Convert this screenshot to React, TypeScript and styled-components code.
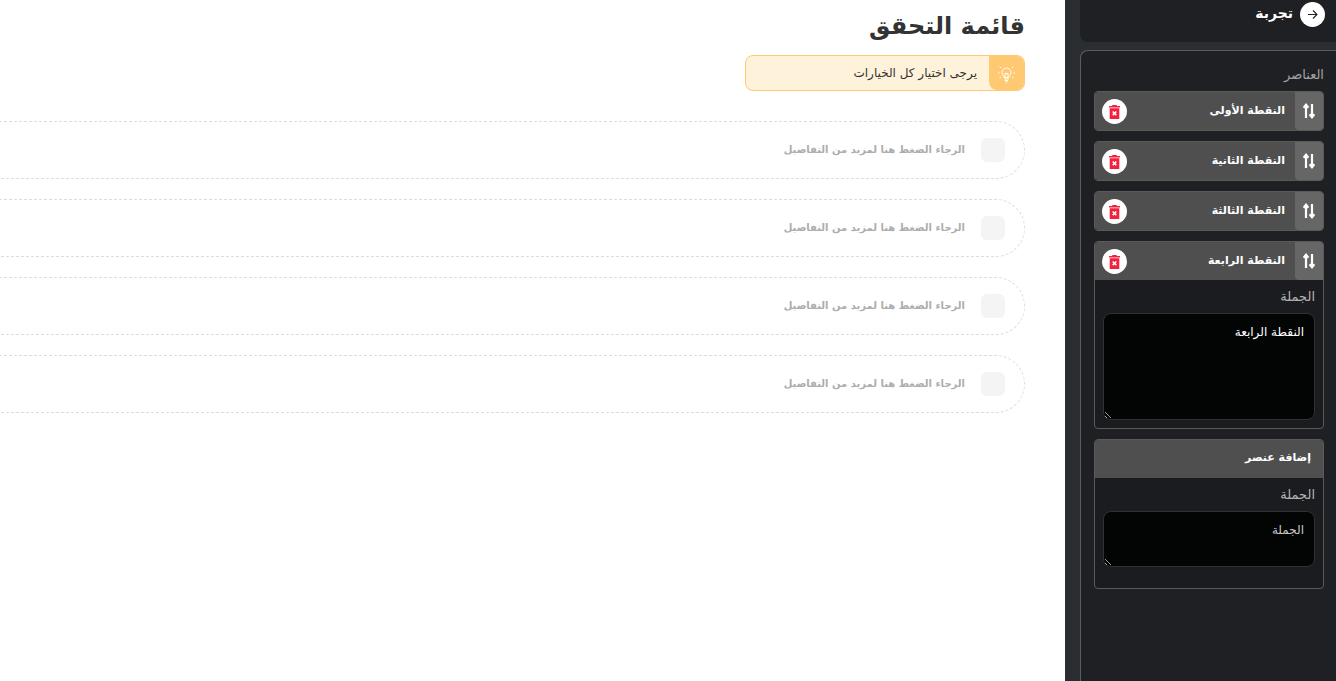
import React from 'react';
import styled, { createGlobalStyle } from 'styled-components';

const Global = createGlobalStyle`
  html, body { margin: 0; padding: 0; height: 100%; background: #fff; }
  #root { height: 100%; }
  * { box-sizing: border-box; }
`;

const Page = styled.div`
  display: flex;
  direction: rtl;
  width: 1336px;
  height: 681px;
  overflow: hidden;
  font-family: "DejaVu Sans", "Noto Sans", sans-serif;
`;

const Sidebar = styled.aside`
  flex: 0 0 271px;
  height: 681px;
  background: #2a2d32;
  display: flex;
  flex-direction: column;
  gap: 8px;
`;

const TopCard = styled.div`
  width: 256px;
  height: 42px;
  background: #1e2024;
  border-bottom-left-radius: 8px;
  display: flex;
  align-items: flex-start;
  gap: 7px;
  padding: 2px 11px 0 0;
`;

const BackButton = styled.span`
  width: 25px;
  height: 25px;
  border-radius: 50%;
  background: #fff;
  color: #222;
  display: flex;
  align-items: center;
  justify-content: center;
`;

const TopTitle = styled.span`
  color: #fff;
  font-size: 14px;
  font-weight: 700;
  line-height: 23px;
`;

const Panel = styled.div`
  width: 256px;
  flex: 1;
  background: #1e2024;
  border: 1px solid #5c5c5c;
  border-right: 0;
  border-bottom: 0;
  border-top-left-radius: 8px;
  padding: 15px 12px 0 12px;
  display: flex;
  flex-direction: column;
  gap: 10px;
`;

const PanelLabel = styled.div`
  color: #a3a3a3;
  font-size: 13px;
  line-height: 18px;
  height: 15px;
`;

const Item = styled.div`
  width: 230px;
  border: 1px solid #5a5a5a;
  border-radius: 4px;
  overflow: hidden;
  background: #1a1c20;
`;

const ItemHeader = styled.div`
  height: 38px;
  display: flex;
  align-items: center;
  background: #4f4f4f;
`;

const Handle = styled.span`
  flex: 0 0 28px;
  height: 38px;
  background: #666;
  border-radius: 0 0 0 4px;
  color: #fff;
  display: flex;
  align-items: center;
  justify-content: center;
`;

const ItemTitle = styled.span`
  flex: 1;
  color: #fff;
  font-size: 11px;
  font-weight: 700;
  padding: 0 10px 2px 0;
`;

const DeleteButton = styled.span`
  width: 25px;
  height: 25px;
  margin-left: 7px;
  margin-top: 1px;
  border-radius: 50%;
  background: #fff;
  display: flex;
  align-items: center;
  justify-content: center;
`;

const ItemBody = styled.div<{ $bottom: number }>`
  padding: 8px 8px ${p => p.$bottom}px 8px;
  display: flex;
  flex-direction: column;
`;

const FieldLabel = styled.label`
  color: #b4b4b4;
  font-size: 13px;
  line-height: 18px;
  height: 25px;
`;

const TextArea = styled.textarea<{ $height: number }>`
  display: block;
  width: 212px;
  height: ${p => p.$height}px;
  background: #030505;
  border: 1px solid #2f3133;
  border-radius: 8px;
  color: #fff;
  font-family: inherit;
  font-size: 12px;
  line-height: 16px;
  padding: 10px 10px;
  direction: rtl;
  outline: none;
  &::placeholder { color: #c8c8c8; opacity: 1; }
`;

const AddHeader = styled.div`
  height: 38px;
  background: #4f4f4f;
  color: #fff;
  font-size: 11px;
  font-weight: 700;
  display: flex;
  align-items: center;
  padding: 0 12px 4px 0;
`;

const Main = styled.main`
  flex: 0 0 1065px;
  height: 681px;
  overflow: hidden;
  background: #fff;
  padding: 8px 40px 0 0;
`;

const Title = styled.h1`
  margin: 0;
  color: #333;
  font-size: 24px;
  font-weight: 700;
  line-height: 36px;
  height: 47px;
`;

const Notice = styled.div`
  width: 280px;
  height: 36px;
  display: flex;
  align-items: stretch;
  background: #fef2da;
  border: 1px solid #ffc971;
  border-radius: 8px;
  overflow: hidden;
  margin-bottom: 30px;
`;

const NoticeIcon = styled.span`
  flex: 0 0 35px;
  background: #ffc971;
  border-radius: 0 0 0 8px;
  display: flex;
  align-items: center;
  justify-content: center;
`;

const NoticeText = styled.span`
  color: #333;
  font-size: 12px;
  line-height: 34px;
  padding-right: 12px;
`;

const Rows = styled.div`
  display: flex;
  flex-direction: column;
  gap: 20px;
  width: 1300px;
`;

const Row = styled.div`
  height: 58px;
  border: 1px dashed #dcdcdc;
  border-radius: 29px;
  display: flex;
  align-items: center;
  gap: 16px;
  padding-right: 19px;
`;

const Check = styled.span`
  width: 24px;
  height: 24px;
  border-radius: 6px;
  background: #f4f4f4;
`;

const RowText = styled.span`
  color: #adadad;
  font-size: 10px;
  font-weight: 700;
  padding-bottom: 2px;
`;

const SortIcon = () => (
  <svg width="12" height="16" viewBox="0 0 12 16" fill="none" stroke="currentColor" strokeWidth="2.2">
    <path d="M3 15V2M.6 4.8L3 1.8l2.4 3" />
    <path d="M9 1v13M6.6 11.2L9 14.2l2.4-3" />
  </svg>
);

const TrashIcon = () => (
  <svg width="11" height="14" viewBox="0 0 11 14">
    <path d="M3.5 0h4l.5 1h3v1.5H0V1h3z" fill="#f5203e" />
    <path d="M.7 3.3h9.6V14H.7z" fill="#f5203e" />
    <path d="M3.7 6.5l3.6 3.6M7.3 6.5l-3.6 3.6" stroke="#fff" strokeWidth="1.6" />
  </svg>
);

const BulbIcon = () => (
  <svg width="19" height="19" viewBox="0 0 19 19" fill="none" stroke="#fff" strokeWidth="1">
    <path d="M7 13.5c0-1.6-2-2.4-2-5a4.5 4.5 0 0 1 9 0c0 2.6-2 3.4-2 5z" />
    <path d="M7.3 15h4.4M7.8 16.5h3.4M8.5 18h2" />
    <path d="M8 13V9.5h3V13" />
    <path d="M2.5 2.5l1.5 1.5M16.5 2.5L15 4M1 9h1.5M16.5 9H18M2.5 14l1.5-1M16.5 14L15 13" />
  </svg>
);

const items = ['النقطة الأولى', 'النقطة الثانية', 'النقطة الثالثة'];

const ItemHead = ({ title }: { title: string }) => (
  <ItemHeader>
    <Handle><SortIcon /></Handle>
    <ItemTitle>{title}</ItemTitle>
    <DeleteButton><TrashIcon /></DeleteButton>
  </ItemHeader>
);

export default function App() {
  return (
    <Page>
      <Global />
      <Sidebar>
        <TopCard>
          <BackButton>
            <svg width="11" height="11" viewBox="0 0 11 11" fill="none" stroke="currentColor" strokeWidth="1.1">
              <path d="M1 5.5h9M6 1.5l4 4-4 4" />
            </svg>
          </BackButton>
          <TopTitle>تجربة</TopTitle>
        </TopCard>
        <Panel>
          <PanelLabel>العناصر</PanelLabel>
          {items.map(title => (
            <Item key={title}>
              <ItemHead title={title} />
            </Item>
          ))}
          <Item>
            <ItemHead title="النقطة الرابعة" />
            <ItemBody $bottom={8}>
              <FieldLabel>الجملة</FieldLabel>
              <TextArea $height={107} defaultValue="النقطة الرابعة" />
            </ItemBody>
          </Item>
          <Item>
            <AddHeader>إضافة عنصر</AddHeader>
            <ItemBody $bottom={21}>
              <FieldLabel>الجملة</FieldLabel>
              <TextArea $height={56} placeholder="الجملة" />
            </ItemBody>
          </Item>
        </Panel>
      </Sidebar>
      <Main>
        <Title>قائمة التحقق</Title>
        <Notice>
          <NoticeIcon><BulbIcon /></NoticeIcon>
          <NoticeText>يرجى اختيار كل الخيارات</NoticeText>
        </Notice>
        <Rows>
          {[0, 1, 2, 3].map(i => (
            <Row key={i}>
              <Check />
              <RowText>الرجاء الضغط هنا لمزيد من التفاصيل</RowText>
            </Row>
          ))}
        </Rows>
      </Main>
    </Page>
  );
}
